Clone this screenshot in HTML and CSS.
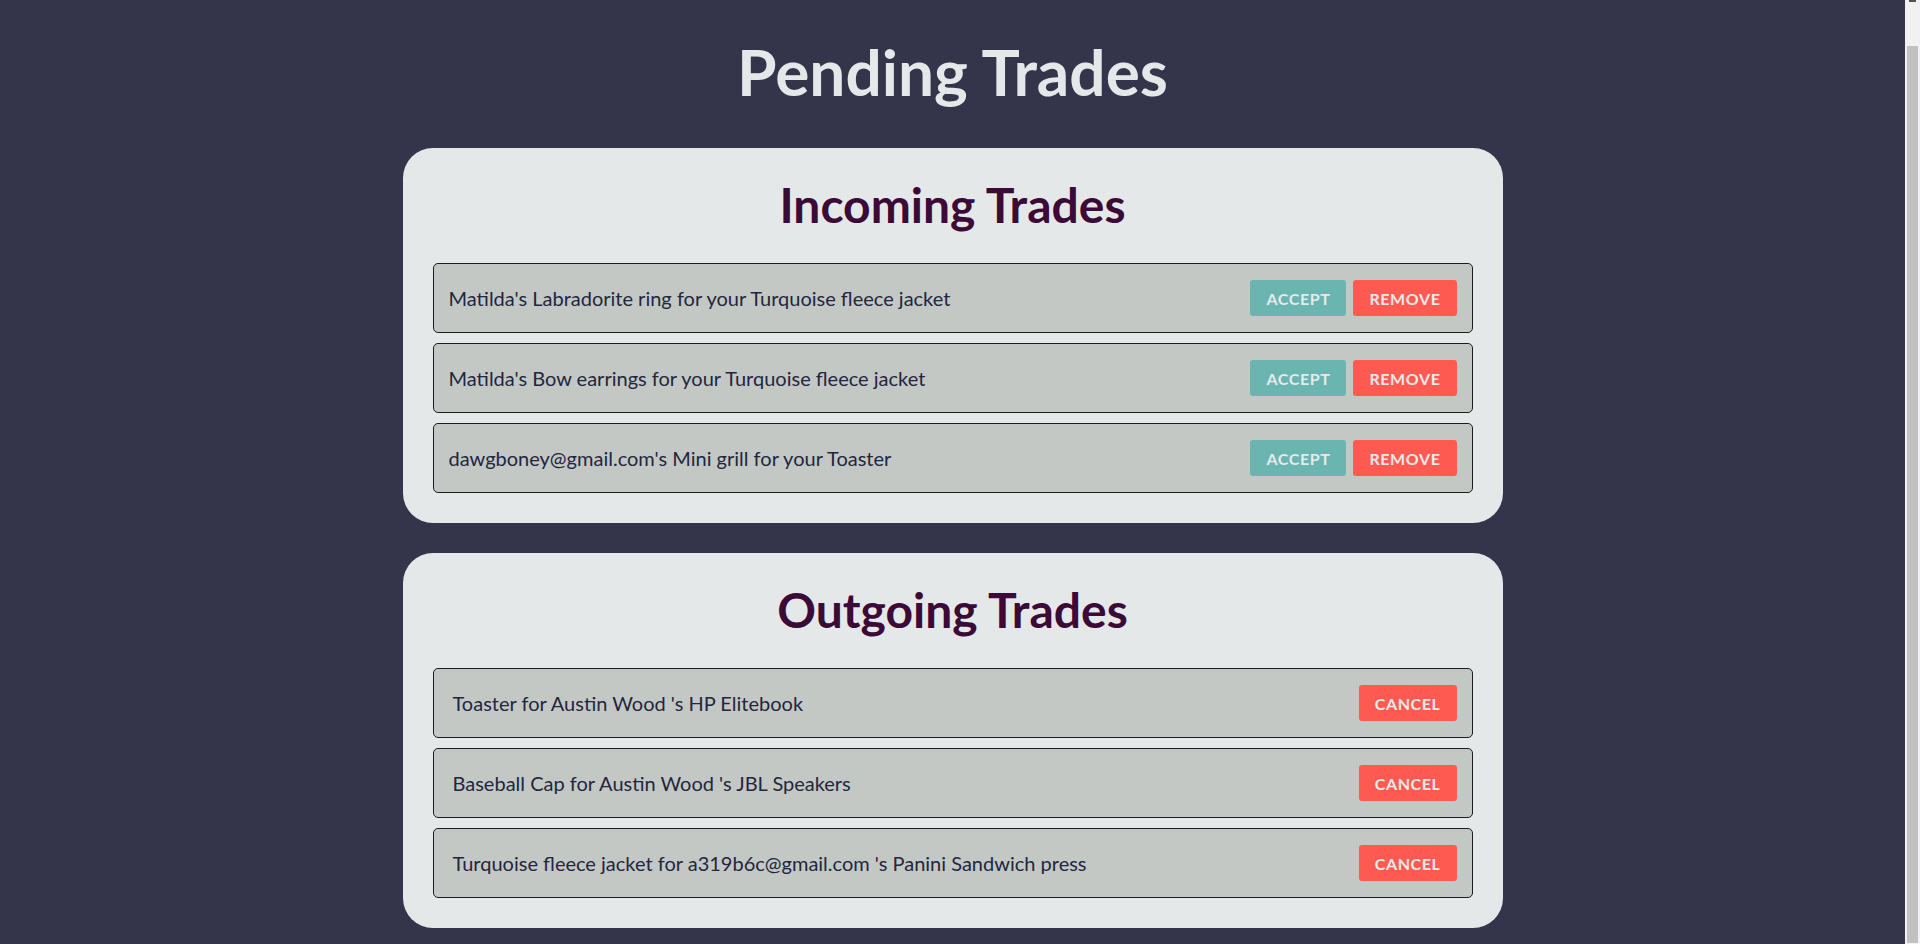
FILE: index.html
```html
<!DOCTYPE html>
<html lang="en">
<head>
<meta charset="utf-8">
<title>Pending Trades</title>
<link rel="stylesheet" href="styles.css">
</head>
<body>
<main class="page">
  <h1 class="page-title">Pending Trades</h1>

  <section class="panel">
    <h2 class="panel-title">Incoming Trades</h2>
    <div class="trade-list">
      <div class="trade">
        <span class="trade-text">Matilda's Labradorite ring for your Turquoise fleece jacket</span>
        <div class="actions">
          <button class="btn btn-accept">Accept</button>
          <button class="btn btn-danger">Remove</button>
        </div>
      </div>
      <div class="trade">
        <span class="trade-text">Matilda's Bow earrings for your Turquoise fleece jacket</span>
        <div class="actions">
          <button class="btn btn-accept">Accept</button>
          <button class="btn btn-danger">Remove</button>
        </div>
      </div>
      <div class="trade">
        <span class="trade-text">dawgboney@gmail.com's Mini grill for your Toaster</span>
        <div class="actions">
          <button class="btn btn-accept">Accept</button>
          <button class="btn btn-danger">Remove</button>
        </div>
      </div>
    </div>
  </section>

  <section class="panel">
    <h2 class="panel-title">Outgoing Trades</h2>
    <div class="trade-list">
      <div class="trade">
        <span class="trade-text trade-text-out">Toaster for Austin Wood 's HP Elitebook</span>
        <div class="actions">
          <button class="btn btn-danger">Cancel</button>
        </div>
      </div>
      <div class="trade">
        <span class="trade-text trade-text-out">Baseball Cap for Austin Wood 's JBL Speakers</span>
        <div class="actions">
          <button class="btn btn-danger">Cancel</button>
        </div>
      </div>
      <div class="trade">
        <span class="trade-text trade-text-out">Turquoise fleece jacket for a319b6c@gmail.com 's Panini Sandwich press</span>
        <div class="actions">
          <button class="btn btn-danger">Cancel</button>
        </div>
      </div>
    </div>
  </section>
</main>
<div class="scrollbar" aria-hidden="true">
  <div class="scrollbar-arrow"></div>
  <div class="scrollbar-thumb"></div>
</div>
</body>
</html>
```

FILE: styles.css
```css
html, body {
  margin: 0;
  padding: 0;
}

body {
  background: #34344a;
  font-family: "Lato", "Open Sans", sans-serif;
  padding-right: 15px;
}

.page {
  width: 1100px;
  margin: 0 auto;
  padding: 28px 0 30px;
  display: flex;
  flex-direction: column;
  gap: 30px;
}

.page-title {
  margin: 0 0 2px;
  text-align: center;
  color: #e4e8e9;
  font-family: "Lato", sans-serif;
  font-weight: 700;
  font-size: 64px;
  line-height: 88px;
}

.panel {
  background: #e4e8e9;
  border-radius: 30px;
  padding: 20px 30px 30px;
}

.panel-title {
  margin: 0 0 22px;
  text-align: center;
  color: #3c0a36;
  font-family: "Lato", sans-serif;
  font-weight: 700;
  font-size: 48px;
  line-height: 73px;
}

.trade-list {
  display: flex;
  flex-direction: column;
  gap: 10px;
}

.trade {
  box-sizing: border-box;
  height: 70px;
  display: flex;
  align-items: center;
  justify-content: space-between;
  padding: 0 15px;
  background: #c4c8c4;
  border: 1px solid #1c1c22;
  border-radius: 5px;
}

.trade-text {
  color: #23263f;
  font-size: 20px;
}

.trade-text-out {
  padding-left: 4px;
}

.actions {
  display: flex;
  gap: 7px;
}

.btn {
  height: 36px;
  border: none;
  border-radius: 3px;
  padding: 0 16px;
  color: #e6eaea;
  font-family: "Lato", sans-serif;
  font-weight: 700;
  font-size: 16px;
  letter-spacing: 0.6px;
  text-transform: uppercase;
  cursor: pointer;
}

.btn-accept {
  background: #6ab5b0;
}

.btn-danger {
  background: #ff5a52;
}

.scrollbar {
  position: fixed;
  top: 0;
  right: 0;
  width: 15px;
  height: 100%;
  background: #f1f1f1;
}

.scrollbar-arrow {
  position: absolute;
  top: 0;
  left: 4px;
  width: 7px;
  height: 2px;
  background: #505050;
}

.scrollbar-thumb {
  position: absolute;
  top: 46px;
  bottom: 1px;
  left: 2px;
  width: 11px;
  background: #c1c1c1;
}
```
